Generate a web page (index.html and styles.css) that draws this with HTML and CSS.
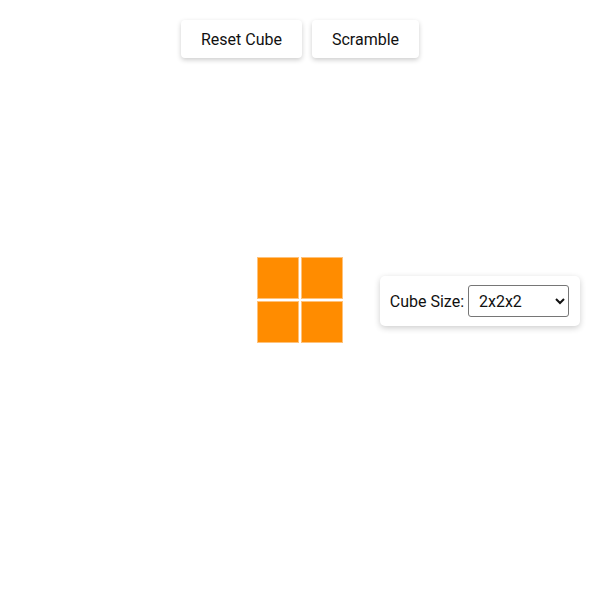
FILE: index.html
```html
<!DOCTYPE html>
<html>
<head>
<meta charset="utf-8">
<link rel="stylesheet" href="styles.css">
</head>
<body>
<div class="toolbar">
  <button class="btn">Reset Cube</button>
  <button class="btn">Scramble</button>
</div>
<div class="stage">
  <div class="cube">
    <div class="cell"></div>
    <div class="cell"></div>
    <div class="cell"></div>
    <div class="cell"></div>
  </div>
</div>
<div class="panel">
  <label class="label" for="size">Cube Size:</label>
  <select id="size" class="select">
    <option>2x2x2</option>
    <option>3x3x3</option>
  </select>
</div>
</body>
</html>
```
FILE: styles.css
```css
html, body {
  margin: 0;
  padding: 0;
  width: 600px;
  height: 600px;
  background: #fff;
  font-family: Roboto, "Liberation Sans", sans-serif;
  overflow: hidden;
}
body { position: relative; }
.toolbar {
  display: flex;
  justify-content: center;
  gap: 10px;
  padding-top: 20px;
}
.btn {
  font-family: Roboto, "Liberation Sans", sans-serif;
  font-size: 16px;
  color: #111;
  background: #fff;
  border: none;
  border-radius: 4px;
  padding: 0 20px;
  height: 38px;
  box-shadow: 0 2px 5px rgba(0,0,0,0.2);
}
.stage {
  position: absolute;
  left: 0; top: 0; right: 0; bottom: 0;
  display: flex;
  align-items: center;
  justify-content: center;
  pointer-events: none;
}
.cube {
  display: grid;
  grid-template-columns: 42px 42px;
  grid-template-rows: 42px 42px;
  gap: 2px;
}
.cell {
  background: #ff8c00;
  border: 1px solid #ffc27a;
  box-sizing: border-box;
}
.panel {
  position: absolute;
  right: 20px;
  top: 276px;
  height: 50px;
  box-sizing: border-box;
  display: flex;
  align-items: center;
  padding: 0 11px 0 10px;
  background: #fff;
  border-radius: 5px;
  box-shadow: 0 2px 6px rgba(0,0,0,0.2);
}
.label {
  font-size: 16px;
  color: #111;
  margin-right: 4px;
}
.select {
  font-family: Roboto, "Liberation Sans", sans-serif;
  font-size: 16px;
  width: 101px;
  height: 32px;
  padding: 0 6px;
  border: 1px solid #767676;
  border-radius: 3px;
  background: #fff;
  color: #111;
}
```
